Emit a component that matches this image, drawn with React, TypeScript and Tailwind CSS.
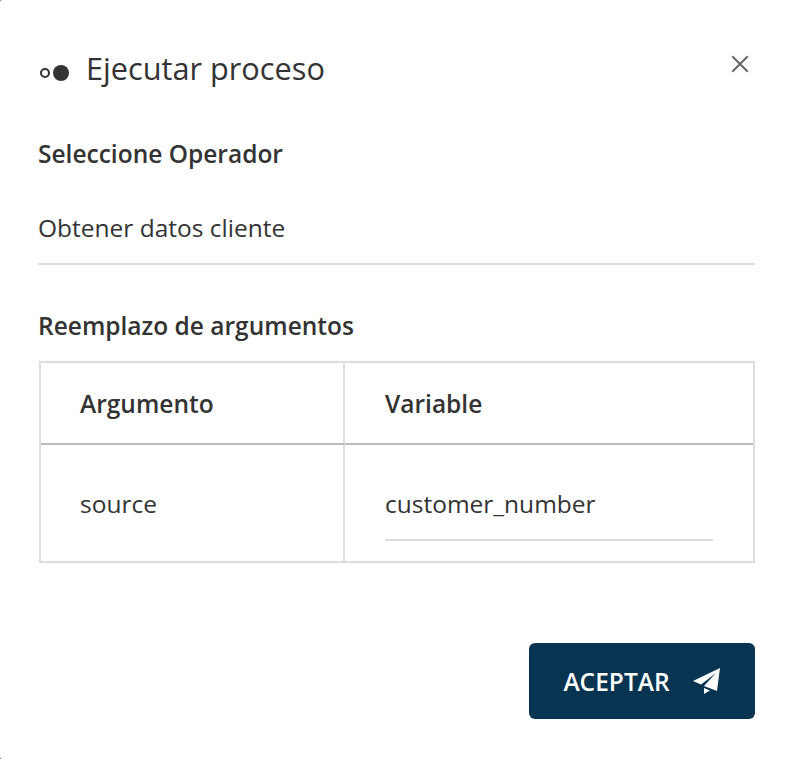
export default function App() {
  return (
    <div className="h-[759px] w-[787px] bg-[#555] font-['Open_Sans','Noto_Sans',sans-serif] text-[#333]">
      <div className="flex h-full flex-col rounded-l-[2px] bg-white pl-[38px] pr-[32px]">
        {/* Cabecera */}
        <div className="flex h-[136px] items-start justify-between pt-[44px]">
          <div className="flex items-center">
            <svg width="32" height="18" viewBox="0 0 32 18" className="mt-[9px]">
              <circle cx="7" cy="9" r="4" fill="none" stroke="#333" strokeWidth="2" />
              <circle cx="23" cy="9" r="8" fill="#333" />
            </svg>
            <h1 className="ml-[16px] text-[30.7px] leading-[48px] font-normal">Ejecutar proceso</h1>
          </div>
          <button className="mr-[6px] mt-[11px] text-[#666]">
            <svg width="18" height="18" viewBox="0 0 18 18" stroke="currentColor" strokeWidth="2" strokeLinecap="square">
              <path d="M2 2 L16 16 M16 2 L2 16" />
            </svg>
          </button>
        </div>

        <h2 className="text-[24.5px] leading-[36px] font-semibold">Seleccione Operador</h2>

        <div className="mt-[34px] h-[59px] border-b-2 border-[#ddd] pt-[4px] text-[24.5px] leading-[36px]">
          Obtener datos cliente
        </div>

        <h2 className="mt-[43px] text-[24.5px] leading-[36px] font-semibold">Reemplazo de argumentos</h2>

        {/* Tabla */}
        <div className="ml-[1px] mt-[17px] grid h-[202px] grid-cols-[304px_1fr] grid-rows-[82px_1fr] border-2 border-[#ddd]">
          <div className="flex items-center border-r-2 border-b-2 border-r-[#ddd] border-b-[#bbb] pl-[39px] pt-[2px] text-[24.5px] font-semibold">
            Argumento
          </div>
          <div className="flex items-center border-b-2 border-b-[#bbb] pl-[40px] pt-[2px] text-[24.5px] font-semibold">
            Variable
          </div>
          <div className="flex items-center border-r-2 border-[#ddd] pl-[39px] pt-[3px] text-[24.5px]">source</div>
          <div className="px-[40px] pt-[41px]">
            <div className="h-[55px] border-b-2 border-[#ddd] text-[24.5px] leading-[36px]">customer_number</div>
          </div>
        </div>

        {/* Acciones */}
        <div className="mt-[80px] flex justify-end">
          <button className="flex h-[76px] w-[226px] items-center justify-center gap-[23px] rounded-[6px] bg-[#073551] text-[24.5px] font-semibold text-white">
            <span className="mt-[2px]">ACEPTAR</span>
            <svg width="28" height="26" viewBox="0 0 28 26" fill="currentColor">
              <path d="M27 0 L0 13 L8 16.5 L23 5 L11 18 L24 23 Z" />
              <path d="M11 20 L11 26 L17 22.5 Z" />
            </svg>
          </button>
        </div>
      </div>
    </div>
  );
}
